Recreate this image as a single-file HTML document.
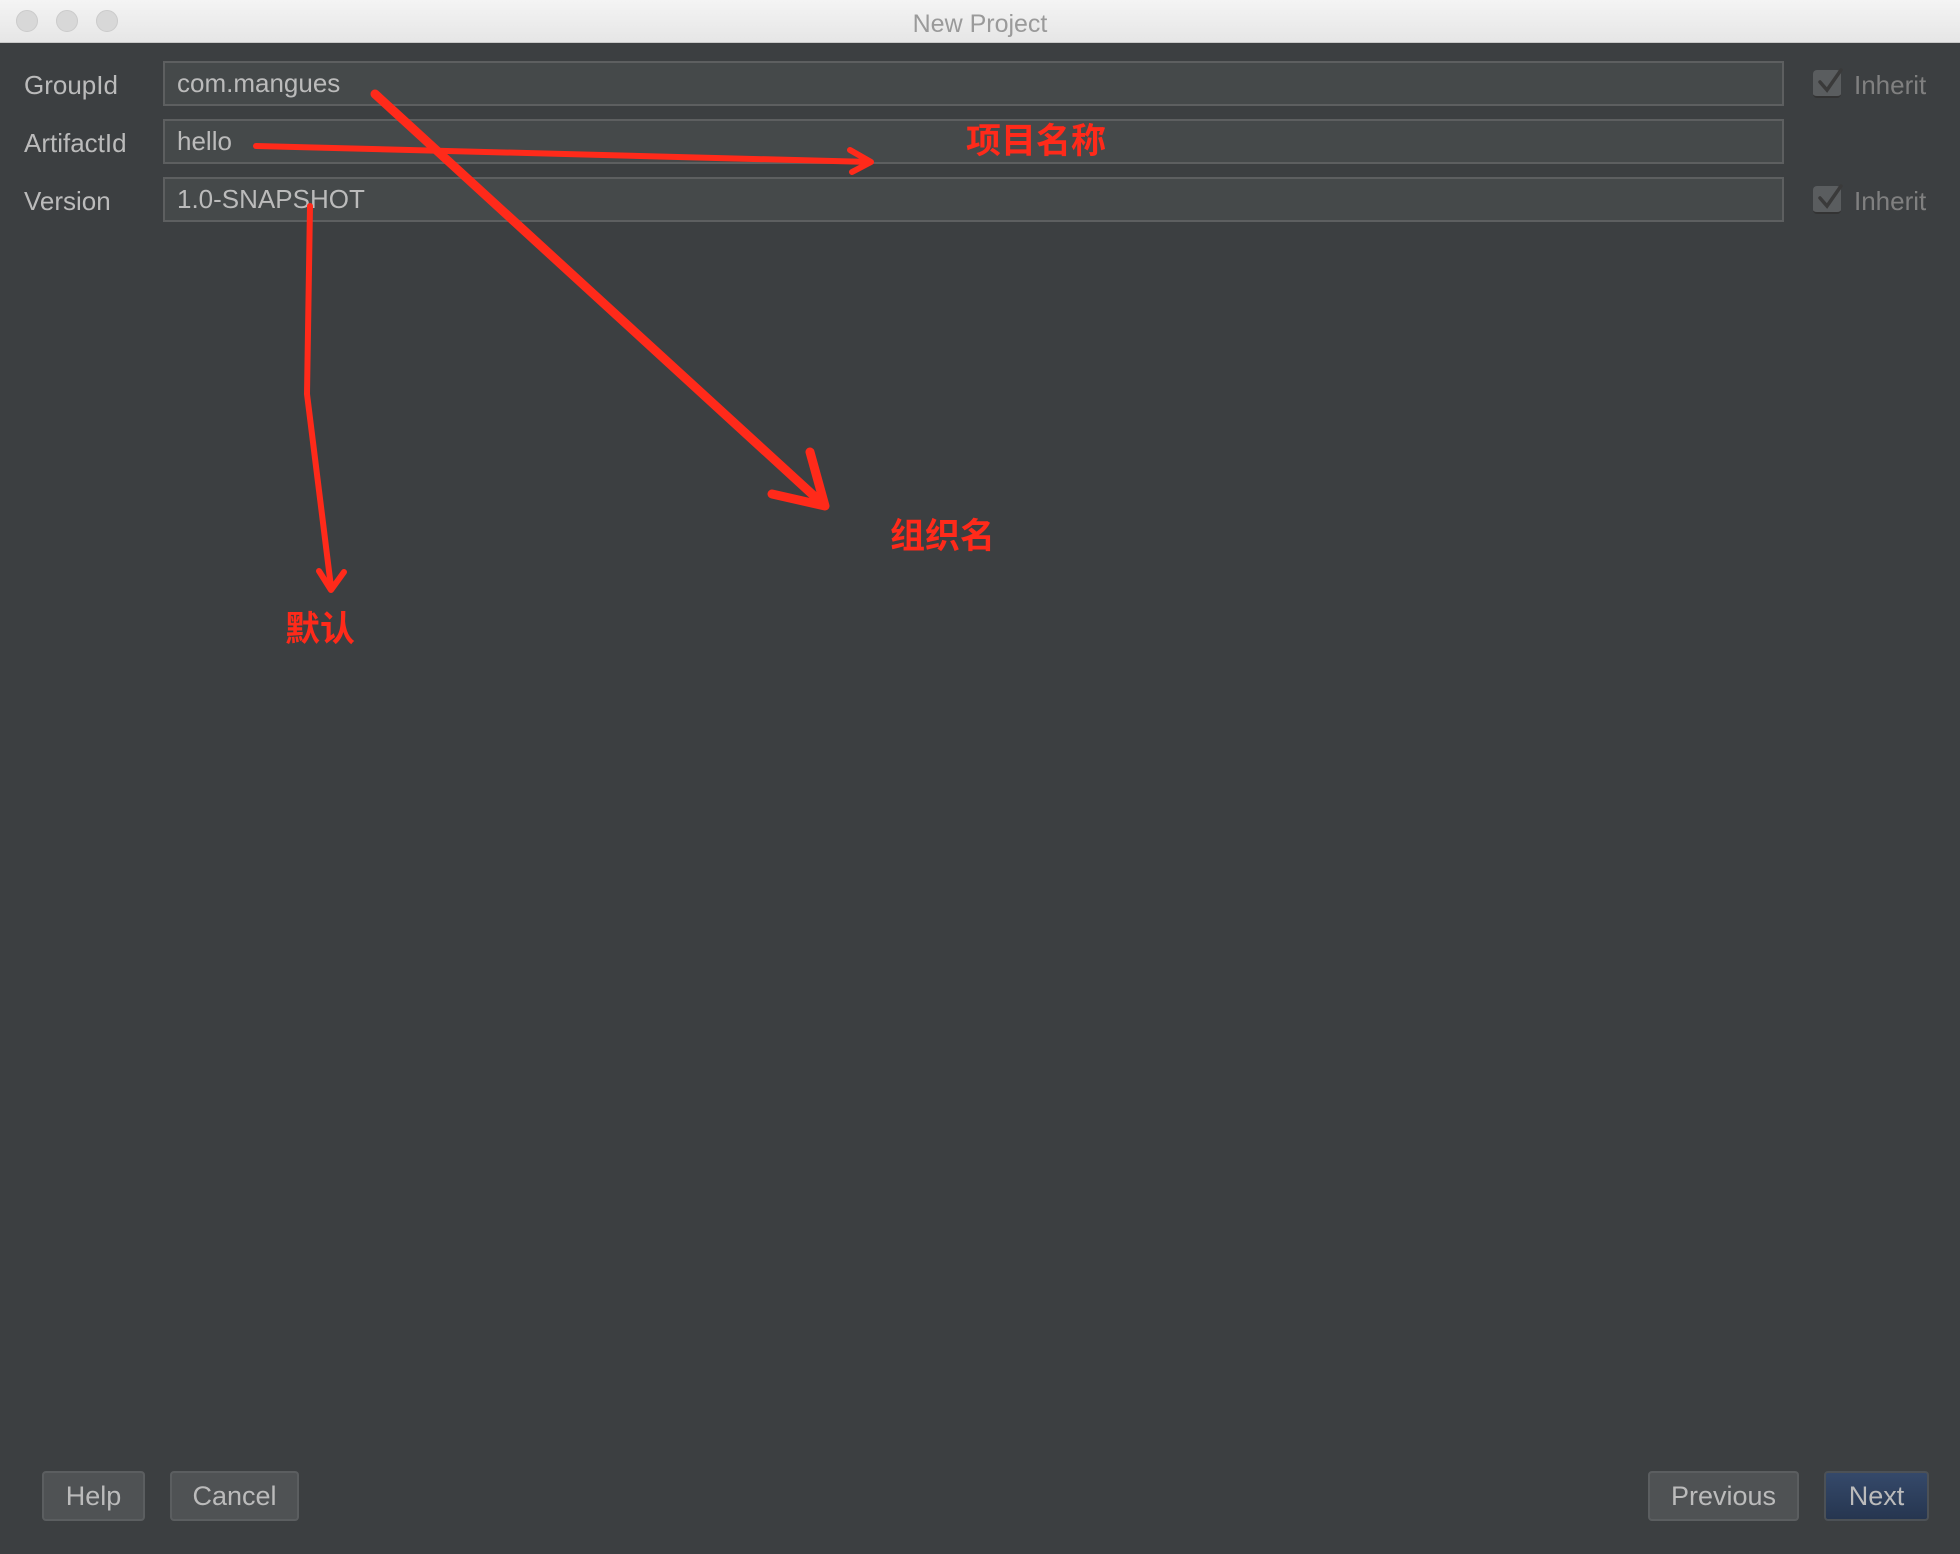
<!DOCTYPE html>
<html><head><meta charset="utf-8"><style>
*{margin:0;padding:0;box-sizing:border-box}
body{width:1960px;height:1554px;background:#3c3f41;font-family:"Liberation Sans","Noto Sans CJK SC",sans-serif;position:relative;overflow:hidden}
.tb{position:absolute;left:0;top:0;width:1960px;height:43px;background:linear-gradient(#f4f4f4,#e6e6e6);border-bottom:1px solid #c8c8c8;text-align:center;line-height:48px;font-size:25px;color:#9a9a9a}
.dot{position:absolute;top:10px;width:22px;height:22px;border-radius:50%;background:#d8d8d8;border:1px solid #cbcbcb}
.lbl{position:absolute;left:24px;font-size:26px;color:#bbbbbb}
.fld{position:absolute;left:163px;width:1621px;height:45px;background:#45494a;border:2px solid #5d5f60;color:#bbbbbb;font-size:26px;line-height:41px;padding-left:12px}
.cb{position:absolute;left:1813px;width:28px;height:28px;background:#5a5d5f;border-radius:4px;border-bottom:2px solid #333}
.inh{position:absolute;left:1854px;font-size:26px;color:#808080}
.btn{position:absolute;top:1471px;height:50px;border:2px solid #5b5e60;border-radius:4px;background:#4f5254;color:#bbbbbb;font-size:27px;text-align:center;line-height:46px}
.cn{position:absolute;color:#ff2a1a;font-size:35px;font-weight:bold;white-space:nowrap}
</style></head><body>
<div class="tb">New Project</div>
<div class="dot" style="left:16px"></div><div class="dot" style="left:56px"></div><div class="dot" style="left:96px"></div>
<div class="lbl" style="top:70px">GroupId</div>
<div class="lbl" style="top:128px">ArtifactId</div>
<div class="lbl" style="top:186px">Version</div>
<div class="fld" style="top:61px">com.mangues</div>
<div class="fld" style="top:119px">hello</div>
<div class="fld" style="top:177px">1.0-SNAPSHOT</div>
<div class="cb" style="top:70px"></div><div class="inh" style="top:70px">Inherit</div>
<div class="cb" style="top:186px"></div><div class="inh" style="top:186px">Inherit</div>
<svg style="position:absolute;left:0;top:0" width="1960" height="1554">
<g stroke="#3a3a3a" stroke-width="3.5" fill="none" stroke-linecap="round"><path d="M1820 82l7 8 14-20"/><path d="M1820 198l7 8 14-20"/></g>
<g stroke="#ff2a1a" fill="none" stroke-linecap="round" stroke-linejoin="round">
<path d="M375 94L825 506M772 494L825 506 810 452" stroke-width="9"/>
<path d="M256 146L871 162M850 150L871 162 852 172" stroke-width="6"/>
<path d="M310 206L307 394 331 587M319 571L331 590 344 572" stroke-width="6"/>
</g></svg>
<div class="cn" style="left:966px;top:113px">项目名称</div>
<div class="cn" style="left:890px;top:508px">组织名</div>
<div class="cn" style="left:285px;top:601px">默认</div>
<div class="btn" style="left:42px;width:103px">Help</div>
<div class="btn" style="left:170px;width:129px">Cancel</div>
<div class="btn" style="left:1648px;width:151px">Previous</div>
<div class="btn" style="left:1824px;width:105px;background:linear-gradient(#35496a,#263650);border-color:#4c5156">Next</div>
</body></html>
